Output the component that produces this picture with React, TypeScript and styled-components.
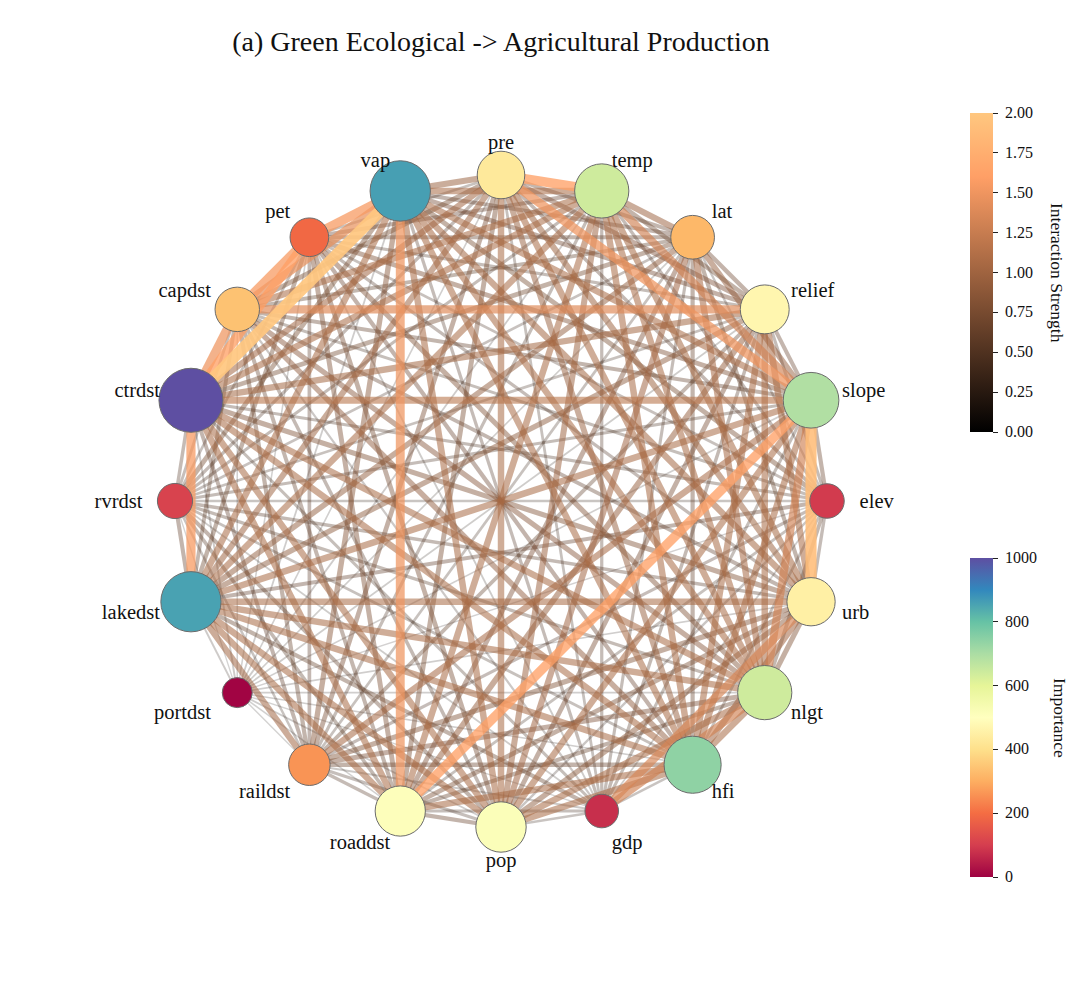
import React from "react";
import styled, { createGlobalStyle } from "styled-components";

// layout of the circular graph, in page pixels
const CX = 501;
const CY = 501;
const R = 326;

const SPECTRAL = [
  "#9e0142",
  "#d53e4f",
  "#f46d43",
  "#fdae61",
  "#fee08b",
  "#ffffbf",
  "#e6f598",
  "#abdda4",
  "#66c2a5",
  "#3288bd",
  "#5e4fa2",
];

type Node = { name: string; importance: number };

const NODES: Node[] = [
  { name: "pre", importance: 430 },
  { name: "temp", importance: 640 },
  { name: "lat", importance: 320 },
  { name: "relief", importance: 470 },
  { name: "slope", importance: 690 },
  { name: "elev", importance: 95 },
  { name: "urb", importance: 450 },
  { name: "nlgt", importance: 640 },
  { name: "hfi", importance: 740 },
  { name: "gdp", importance: 75 },
  { name: "pop", importance: 515 },
  { name: "roaddst", importance: 510 },
  { name: "raildst", importance: 260 },
  { name: "portdst", importance: 5 },
  { name: "lakedst", importance: 855 },
  { name: "rvrdst", importance: 110 },
  { name: "ctrdst", importance: 1000 },
  { name: "capdst", importance: 340 },
  { name: "pet", importance: 190 },
  { name: "vap", importance: 860 },
];

// the strong pairs that stand out in the figure
const STRONG: Record<string, number> = {
  "ctrdst|vap": 2.0,
  "pet|vap": 1.55,
  "capdst|vap": 1.45,
  "capdst|pet": 1.55,
  "capdst|ctrdst": 1.5,
  "ctrdst|pet": 1.6,
  "ctrdst|lakedst": 1.55,
  "roaddst|vap": 1.5,
  "pre|temp": 1.6,
  "pre|slope": 1.5,
  "slope|temp": 1.3,
  "capdst|relief": 1.4,
  "roaddst|slope": 1.6,
  "slope|urb": 1.9,
  "gdp|urb": 1.35,
  "nlgt|slope": 1.3,
  "gdp|nlgt": 1.3,
  "ctrdst|slope": 1.15,
  "lakedst|urb": 1.05,
  "pop|pre": 1.05,
};

const hexToRgb = (hex: string) => [
  parseInt(hex.slice(1, 3), 16),
  parseInt(hex.slice(3, 5), 16),
  parseInt(hex.slice(5, 7), 16),
];

function spectral(value: number) {
  const t = (value / 1000) * 10;
  const i = Math.min(9, Math.floor(t));
  const f = t - i;
  const a = hexToRgb(SPECTRAL[i]);
  const b = hexToRgb(SPECTRAL[i + 1]);
  const c = a.map((v, k) => Math.round(v + (b[k] - v) * f));
  return `rgb(${c[0]}, ${c[1]}, ${c[2]})`;
}

function copper(t: number) {
  const r = Math.round(Math.min(1, 1.25 * t) * 255);
  const g = Math.round(0.7812 * t * 255);
  const b = Math.round(0.4975 * t * 255);
  return `rgb(${r}, ${g}, ${b})`;
}

function noise(i: number, j: number) {
  const x = Math.sin((i + 1) * 127.1 + (j + 1) * 311.7) * 43758.5453;
  return x - Math.floor(x);
}

const positions = NODES.map((n, i) => {
  const a = ((-90 + 18 * i) * Math.PI) / 180;
  return {
    ...n,
    cos: Math.cos(a),
    x: CX + R * Math.cos(a),
    y: CY + R * Math.sin(a),
    lx: CX + 1.1 * R * Math.cos(a),
    ly: CY + 1.1 * R * Math.sin(a),
    r: Math.sqrt(221 + 0.803 * n.importance),
    fill: spectral(n.importance),
  };
});

const edges = (() => {
  const list: { x1: number; y1: number; x2: number; y2: number; s: number }[] = [];
  for (let i = 0; i < NODES.length; i++) {
    for (let j = i + 1; j < NODES.length; j++) {
      const a = positions[i];
      const b = positions[j];
      const key = [a.name, b.name].sort().join("|");
      const w = Math.sqrt((a.importance / 1000) * (b.importance / 1000));
      let s = Math.min(1.05, 0.08 + 1.6 * w * (0.55 + 0.9 * noise(i, j)));
      if (STRONG[key] !== undefined) s = STRONG[key];
      list.push({ x1: a.x, y1: a.y, x2: b.x, y2: b.y, s });
    }
  }
  return list.sort((p, q) => p.s - q.s);
})();

const GlobalStyle = createGlobalStyle`
  html, body {
    margin: 0;
    padding: 0;
    background: #ffffff;
  }
  body {
    font-family: "Liberation Serif", "Times New Roman", serif;
    color: #111;
  }
`;

const Figure = styled.div`
  width: 1080px;
  height: 1003px;
  display: flex;
  background: #ffffff;
  overflow: hidden;
`;

const Main = styled.div`
  width: 940px;
  display: flex;
  flex-direction: column;
`;

const Title = styled.h1`
  margin: 26px 0 0 0;
  padding-left: 62px;
  font-family: "Liberation Serif", "Times New Roman", serif;
  font-weight: normal;
  font-size: 28px;
  line-height: 32px;
  text-align: center;
  color: #111;
`;

const Graph = styled.svg`
  display: block;
  margin-top: 22px;
  font-family: "Liberation Serif", "Times New Roman", serif;
`;

const Side = styled.div`
  padding: 113px 0 0 30px;
  display: flex;
  flex-direction: column;
  gap: 126px;
`;

const ColorbarRow = styled.div`
  display: flex;
  height: 319px;
`;

const Bar = styled.div<{ $gradient: string }>`
  width: 23px;
  height: 100%;
  background: linear-gradient(to top, ${(p) => p.$gradient});
`;

const TickArea = styled.div<{ $width: number }>`
  position: relative;
  width: ${(p) => p.$width}px;
  height: 100%;
`;

const Tick = styled.div<{ $pos: number }>`
  position: absolute;
  left: 0;
  top: ${(p) => p.$pos}%;
  display: flex;
  align-items: center;
  transform: translateY(-50%);
`;

const TickMark = styled.span`
  width: 5px;
  height: 1px;
  background: #222;
`;

const TickLabel = styled.span`
  margin-left: 7px;
  font-size: 16px;
  line-height: 1;
  color: #111;
`;

const AxisLabel = styled.div<{ $gap: number }>`
  align-self: center;
  margin-left: ${(p) => p.$gap}px;
  writing-mode: vertical-rl;
  font-size: 17.5px;
  line-height: 20px;
  color: #111;
`;

type ColorbarProps = {
  gradient: string;
  ticks: { value: number; label: string }[];
  max: number;
  tickWidth: number;
  gap: number;
  label: string;
};

function Colorbar({ gradient, ticks, max, tickWidth, gap, label }: ColorbarProps) {
  return (
    <ColorbarRow>
      <Bar $gradient={gradient} />
      <TickArea $width={tickWidth}>
        {ticks.map((t) => (
          <Tick key={t.label} $pos={(1 - t.value / max) * 100}>
            <TickMark />
            <TickLabel>{t.label}</TickLabel>
          </Tick>
        ))}
      </TickArea>
      <AxisLabel $gap={gap}>{label}</AxisLabel>
    </ColorbarRow>
  );
}

const strengthTicks = [0, 0.25, 0.5, 0.75, 1, 1.25, 1.5, 1.75, 2].map((v) => ({
  value: v,
  label: v.toFixed(2),
}));

const importanceTicks = [0, 200, 400, 600, 800, 1000].map((v) => ({
  value: v,
  label: String(v),
}));

const COPPER = "#000000 0%, #ff9f66 80%, #ffc77f 100%";
const SPECTRAL_R = SPECTRAL.map((c, i) => `${c} ${i * 10}%`).join(", ");

export default function App() {
  return (
    <>
      <GlobalStyle />
      <Figure>
        <Main>
          <Title>(a) Green Ecological -&gt; Agricultural Production</Title>
          <Graph width={940} height={860} viewBox="0 80 940 860">
            <g>
              {edges.map((e, k) => {
                const t = e.s / 2;
                return (
                  <line
                    key={k}
                    x1={e.x1}
                    y1={e.y1}
                    x2={e.x2}
                    y2={e.y2}
                    stroke={copper(t)}
                    strokeOpacity={0.14 + 0.78 * t}
                    strokeWidth={0.8 + 5.4 * e.s}
                  />
                );
              })}
            </g>
            <g>
              {positions.map((n) => (
                <circle
                  key={n.name}
                  cx={n.x}
                  cy={n.y}
                  r={n.r}
                  fill={n.fill}
                  stroke="#6b6b6b"
                  strokeWidth={1}
                />
              ))}
            </g>
            <g>
              {positions.map((n) => (
                <text
                  key={n.name}
                  x={n.lx}
                  y={n.ly}
                  fontSize={20.5}
                  fill="#111"
                  dominantBaseline="central"
                  textAnchor={Math.abs(n.cos) < 0.01 ? "middle" : n.cos > 0 ? "start" : "end"}
                >
                  {n.name}
                </text>
              ))}
            </g>
          </Graph>
        </Main>
        <Side>
          <Colorbar
            gradient={COPPER}
            ticks={strengthTicks}
            max={2}
            tickWidth={40}
            gap={14}
            label="Interaction Strength"
          />
          <Colorbar
            gradient={SPECTRAL_R}
            ticks={importanceTicks}
            max={1000}
            tickWidth={44}
            gap={13}
            label="Importance"
          />
        </Side>
      </Figure>
    </>
  );
}
